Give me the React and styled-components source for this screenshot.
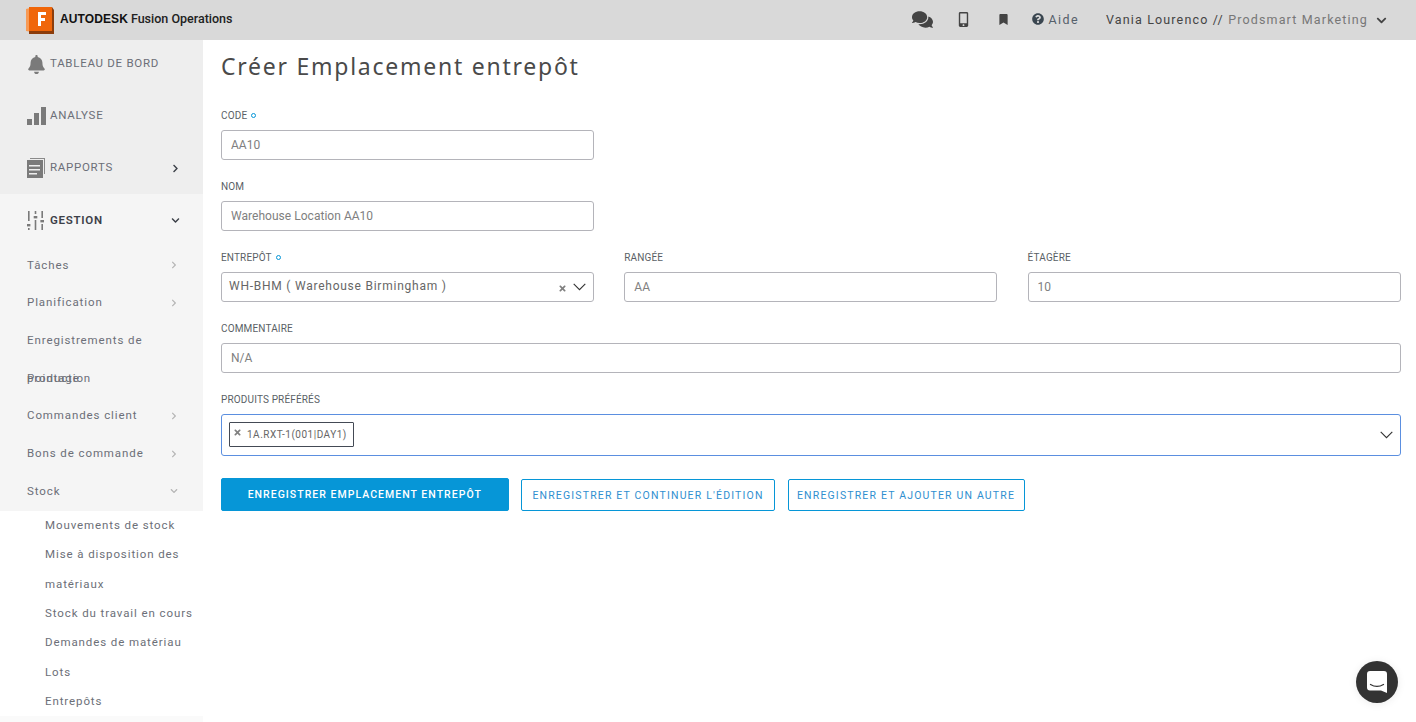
import React from "react";
import styled, { createGlobalStyle } from "styled-components";
import { FaBell, FaComments, FaMobileAlt, FaBookmark, FaQuestionCircle, FaChevronDown, FaChevronRight, FaTimes } from "react-icons/fa";

const Global = createGlobalStyle`
  html, body { margin: 0; padding: 0; height: 722px; overflow: hidden; background: #fff; }
  body { font-family: Roboto, "Noto Sans", "Liberation Sans", sans-serif; color: #4a4a4a; }
  * { box-sizing: border-box; }
`;
const Page = styled.div`display: flex; flex-direction: column; height: 722px; overflow: hidden; position: relative;`;
const Header = styled.header`
  position: relative; z-index: 2; flex: 0 0 40px; height: 40px; background: #d9d9d9;
  display: flex; align-items: center; padding: 0 29px 2px 26px;
`;
const Brand = styled.div`display: flex; align-items: center; gap: 6px; flex: 1;`;
const LogoBox = styled.span`display: flex; margin-top: 2px;`;
const Wordmark = styled.div`font-family: "Liberation Sans", sans-serif; font-size: 12px; font-weight: 700; color: #111; letter-spacing: .1px; white-space: nowrap; margin-bottom: 1px;
  span { font-family: Roboto, sans-serif; font-weight: 500; font-size: 12.5px; color: #222; margin-left: 3px; letter-spacing: 0; }
`;
const TopIcon = styled.span`display: flex; color: #444; font-size: ${p => p.$size}px; margin-right: ${p => p.$mr}px;`;
const Help = styled.div`display: flex; align-items: center; gap: 4px; font-size: 12.5px; letter-spacing: 1.4px; color: #56606a; margin-right: 27px;
  svg { color: #3a4650; font-size: 12px; }
`;
const User = styled.div`font-size: 12.5px; letter-spacing: 1.15px; color: #444; white-space: nowrap; margin-right: 8px;
  span { color: #777; }
`;
const Body = styled.div`flex: 1; display: flex; min-height: 0;`;
const Sidebar = styled.nav`flex: 0 0 203px; width: 203px; margin-top: -2px; background: #f5f5f5; display: flex; flex-direction: column; height: 684px;`;
const TopGroup = styled.div`background: #eeeeee; flex: none;`;
const NavRow = styled.div`
  flex: none; height: 52px; display: flex; align-items: center; padding: 0 23px ${p => p.$bold ? 0 : 2}px 27px;
  font-size: 11.5px; letter-spacing: .72px; color: #6c6f78; text-transform: uppercase;
  font-weight: ${p => p.$bold ? 600 : 400}; ${p => p.$bold && "color:#3c4048;"}
`;
const NavIcon = styled.span`flex: 0 0 23px; display: flex; color: #7a7a7a; margin-top: ${p => p.$flat ? 0 : 2}px;`;
const Grow = styled.span`flex: 1;`;
const Chev = styled.span`display: flex; margin-top: ${p => p.$flat ? 0 : 2}px; font-size: ${p => p.$size || 9}px; color: ${p => p.$c || "#3c4048"};`;
const SubRow = styled.div`
  flex: none; height: 37.7px; padding: .5px 25px 0 27px; display: flex; align-items: flex-start;
  font-size: 11.5px; letter-spacing: .9px; color: #6c6f78;
`;
const SubText = styled.span`flex: 1; min-width: 0; line-height: 37.7px;`;
const SubChev = styled.span`display: flex; font-size: 8px; color: #b5b5b5; height: 37.7px; align-items: center;`;
const Third = styled.div`flex: none; background: #fff; padding: 0 6px 0 45px; margin-top: 1px;`;
const ThirdItem = styled.div`font-size: 11.5px; letter-spacing: .9px; line-height: 29.35px; color: #6c6f78;`;
const Foot = styled.div`flex: 1; background: #fafafa;`;
const Main = styled.main`flex: 1; padding: 0 15px 0 18px; min-width: 0;`;
const Title = styled.h1`margin: 0 0 15px; height: 52px; font: 400 23px/52px "Noto Sans", sans-serif; letter-spacing: 1.75px; color: #4a4a4a;`;
const Grid = styled.div`display: grid; grid-template-columns: repeat(3, 373px); column-gap: 30.3px; row-gap: 18px;`;
const Field = styled.div`grid-column: span ${p => p.$span || 1}; ${p => p.$newRow && "grid-column-start: 1;"}`;
const Label = styled.label`display: flex; align-items: center; gap: 4px; height: 16px; margin-bottom: 7px; font-size: 10px; letter-spacing: .15px; text-transform: uppercase; color: #5a5f66;`;
const Req = styled.i`width: 5px; height: 5px; border: 1px solid #0696d7; border-radius: 50%; display: block;`;
const Input = styled.input`
  display: block; width: 100%; height: 30px; border: 1px solid #b4b4ba; border-radius: 3px; outline: 0; padding: 0 9px;
  font: 400 12px Roboto, sans-serif; letter-spacing: .03px; color: #808080; background: #fff;
`;
const Select = styled.div`
  height: 30px; border: 1px solid #b4b4ba; border-radius: 3px; display: flex; align-items: center; padding: 0 7px 2px;
  font-size: 12px; letter-spacing: .76px; color: #666;
`;
const Clear = styled.span`display: flex; color: #808080; font-size: 9px; margin: 4px 6px 0 0;`;
const CaretBox = styled.span`display: flex; margin-top: 2px;`;
const Caret = () => <CaretBox><svg width="13" height="8" viewBox="0 0 13 8"><path d="M.7.9l5.8 5.8L12.3.9" fill="none" stroke="#333" strokeWidth="1.1"/></svg></CaretBox>;
const Multi = styled.div`
  height: 42px; border: 1px solid #5b8fe0; border-radius: 3px; display: flex; align-items: center; padding: 0 7px 2px 7px;
`;
const Chip = styled.div`
  height: 25px; width: 125px; border: 1px solid #444a55; border-radius: 1px; display: flex; align-items: center; gap: 5px; padding: 0 0 0 3px;
  font-size: 10px; letter-spacing: .5px; color: #666; white-space: nowrap;
  svg { color: #808080; font-size: 9px; margin-top: -4px; }
`;
const Actions = styled.div`display: flex; align-items: flex-end; gap: 12.5px; margin-top: 22px; height: 33px;`;
const Button = styled.button`
  height: ${p => p.$primary ? 33 : 32}px; width: ${p => p.$w}px; padding: 0; border-radius: 2px; cursor: pointer;
  border: 1px solid #0696d7; background: ${p => p.$primary ? "#0696d7" : "#fff"}; color: ${p => p.$primary ? "#fff" : "#2f8fd0"};
  font: ${p => p.$primary ? 500 : 400} 10.5px Roboto, sans-serif; letter-spacing: ${p => p.$primary ? 1.03 : 1.17}px; text-transform: uppercase; white-space: nowrap;
`;
const Chat = styled.div`position: absolute; right: 18px; bottom: 19px; width: 42px; height: 42px; border-radius: 50%; background: #333; display: flex; align-items: center; justify-content: center; box-shadow: 0 1px 8px rgba(0,0,0,.08);`;

const Logo = () => (
  <LogoBox><svg width="28" height="27" viewBox="0 0 28 27">
    <path d="M0 2l8-2h18v6H6v19l-6-1z" fill="#f79a55"/>
    <path d="M3 24h25v3H3z" fill="#8c3d0c"/>
    <path d="M26 0v24h2V3z" fill="#8c3d0c"/>
    <rect x="3" y="0" width="23" height="24" fill="#f0660a"/>
    <path d="M12 5h8v3h-5v3h4v3h-4v5h-3z" fill="#fff"/>
  </svg></LogoBox>
);
const Bars = () => <svg width="19" height="20" viewBox="0 0 19 20" fill="#7a7a7a"><rect y="13" width="5" height="6"/><rect x="7" y="7" width="5" height="12"/><rect x="14" y="1" width="5" height="18"/></svg>;
const Doc = () => (
  <svg width="18" height="20" viewBox="0 0 18 20">
    <path d="M3 0h15v16h-1V1H3z" fill="#8a8a8a"/>
    <rect x="0" y="2" width="16" height="18" fill="#7a7a7a"/>
    <path d="M2 7h11v1.4H2zM2 11h11v1.4H2zM2 15h8v1.4H2z" fill="#eee"/>
  </svg>
);
const Sliders = () => (
  <svg width="17" height="19" viewBox="0 0 17 19" fill="#7a7a7a">
    <rect x="1" y="0" width="1.6" height="10"/><rect x="0" y="13" width="3.4" height="2.4"/><rect x="1" y="17" width="1.6" height="2"/>
    <rect x="7.7" y="0" width="1.6" height="3"/><rect x="6.7" y="5" width="3.6" height="2.4"/><rect x="7.7" y="9" width="1.6" height="10"/>
    <rect x="14.4" y="0" width="1.6" height="7"/><rect x="13.4" y="9" width="3.6" height="2.4"/><rect x="14.4" y="13" width="1.6" height="6"/>
  </svg>
);
const ChatGlyph = () => (
  <svg width="20" height="22" viewBox="0 0 20 22">
    <path d="M3 0h14a3 3 0 0 1 3 3v19l-6-2.5H3a3 3 0 0 1-3-3V3a3 3 0 0 1 3-3z" fill="#fff"/>
    <path d="M3.5 13.5c4 2.4 9 2.4 13 0" fill="none" stroke="#333" strokeWidth="1.3" strokeLinecap="round"/>
  </svg>
);

const subs = [
  ["Tâches", 1], ["Planification", 1], ["Enregistrements de production", 0], ["Pointage", 0], ["Commandes client", 1], ["Bons de commande", 1],
];
const thirds = ["Mouvements de stock", "Mise à disposition des matériaux", "Stock du travail en cours", "Demandes de matériau", "Lots", "Entrepôts"];

export default function App() {
  return (
    <Page>
      <Global />
      <Header>
        <Brand><Logo /><Wordmark>AUTODESK<span>Fusion Operations</span></Wordmark></Brand>
        <TopIcon $size={21} $mr={23}><FaComments /></TopIcon>
        <TopIcon $size={15} $mr={27}><FaMobileAlt /></TopIcon>
        <TopIcon $size={11} $mr={23}><FaBookmark /></TopIcon>
        <Help><FaQuestionCircle />Aide</Help>
        <User>Vania Lourenco // <span>Prodsmart Marketing</span></User>
        <Chev $size={11} $c="#444"><FaChevronDown /></Chev>
      </Header>
      <Body>
        <Sidebar>
          <TopGroup>
            <NavRow><NavIcon><FaBell size={19} /></NavIcon>Tableau de bord</NavRow>
            <NavRow><NavIcon><Bars /></NavIcon>Analyse</NavRow>
            <NavRow><NavIcon><Doc /></NavIcon>Rapports<Grow /><Chev><FaChevronRight /></Chev></NavRow>
          </TopGroup>
          <NavRow $bold><NavIcon $flat><Sliders /></NavIcon>Gestion<Grow /><Chev $flat><FaChevronDown /></Chev></NavRow>
          {subs.map(([t, c]) => (
            <SubRow key={t}><SubText>{t}</SubText>{c ? <SubChev><FaChevronRight /></SubChev> : null}</SubRow>
          ))}
          <SubRow><SubText>Stock</SubText><SubChev><FaChevronDown /></SubChev></SubRow>
          <Third>{thirds.map(t => <ThirdItem key={t}>{t}</ThirdItem>)}</Third>
          <Foot />
        </Sidebar>
        <Main>
          <Title>Créer Emplacement entrepôt</Title>
          <Grid>
            <Field><Label>Code <Req /></Label><Input readOnly value="AA10" /></Field>
            <Field $newRow><Label>Nom</Label><Input readOnly value="Warehouse Location AA10" /></Field>
            <Field $newRow>
              <Label>Entrepôt <Req /></Label>
              <Select><Grow>WH-BHM ( Warehouse Birmingham )</Grow><Clear><FaTimes /></Clear><Caret /></Select>
            </Field>
            <Field><Label>Rangée</Label><Input readOnly value="AA" /></Field>
            <Field><Label>Étagère</Label><Input readOnly value="10" /></Field>
            <Field $span={3}><Label>Commentaire</Label><Input readOnly value="N/A" /></Field>
            <Field $span={3}>
              <Label>Produits préférés</Label>
              <Multi><Chip><FaTimes />1A.RXT-1(001|DAY1)</Chip><Grow /><Caret /></Multi>
            </Field>
          </Grid>
          <Actions>
            <Button $primary $w={287.5}>Enregistrer Emplacement entrepôt</Button>
            <Button $w={254}>Enregistrer et continuer l'édition</Button>
            <Button $w={237}>Enregistrer et ajouter un autre</Button>
          </Actions>
        </Main>
      </Body>
      <Chat><ChatGlyph /></Chat>
    </Page>
  );
}
